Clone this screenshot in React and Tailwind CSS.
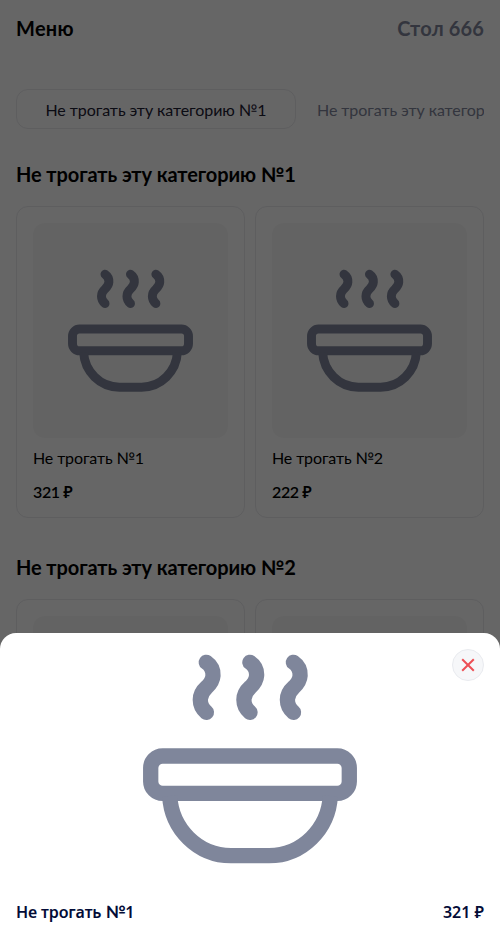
const steam = "c4.6 3.2 7 7.8 6.7 13.3c-.3 5.2-3.1 8.6-6.6 11.9c-3.7 3.3-6.1 7.3-6.1 12.3c0 4.8 2.3 9.4 6.1 12.6";

function BowlIcon({ className }) {
  return (
    <svg className={className} viewBox="143 655 214 209" fill="none" stroke="currentColor" strokeWidth="15.3" strokeLinecap="round">
      <path d={"M206.3 662.3" + steam} />
      <path d={"M249.9 662.3" + steam} />
      <path d={"M293.4 662.3" + steam} />
      <rect x="150.7" y="756" width="198.6" height="37.4" rx="12" />
      <path strokeLinecap="butt" d="M169.7 796C171.5 829 198 855.6 231 855.6H269C302 855.6 328.5 829 330.3 796" />
    </svg>
  );
}

function Card({ name, price }) {
  return (
    <article className="flex h-[312px] flex-1 flex-col rounded-xl border border-[#ebebee] p-4">
      <div className="flex h-[215px] shrink-0 items-center justify-center rounded-xl bg-[#f8f8f8] pt-px">
        <BowlIcon className="w-[125px] overflow-visible text-[#7f869b]" />
      </div>
      <p className="mt-2 text-base leading-6 tracking-[-0.12px]">{name}</p>
      <p className="mt-[10px] text-base leading-6 font-semibold tracking-[-0.4px]">{price}</p>
    </article>
  );
}

function Section({ title, items }) {
  return (
    <section className="mb-[35px]">
      <h2 className="mb-[18px] text-xl leading-7 font-bold tracking-[-0.09px] whitespace-nowrap">{title}</h2>
      <div className="flex gap-[10px]">
        {items.map((item) => <Card key={item.name} {...item} />)}
      </div>
    </section>
  );
}

const items = [
  { name: "Не трогать №1", price: "321 ₽" },
  { name: "Не трогать №2", price: "222 ₽" },
];

export default function App() {
  return (
    <div className="relative h-[939px] w-full overflow-hidden bg-white font-['Lato','Noto_Sans',sans-serif] text-black">
      <main className="px-4 pt-[14px]">
        <header className="flex justify-between text-xl leading-7 font-bold">
          <h1 className="tracking-[0.3px]">Меню</h1>
          <span className="tracking-[0.15px] text-[#7f869b]">Стол 666</span>
        </header>
        <nav className="mt-[47px] mb-[31px] flex h-10 overflow-hidden text-base tracking-[-0.06px] whitespace-nowrap">
          <button className="w-[280px] shrink-0 rounded-xl border border-[#ebebee] pt-0.5 text-[#1d2033]">Не трогать эту категорию №1</button>
          <button className="shrink-0 pt-0.5 pl-[21px] text-[#7f869b]">Не трогать эту категорию №2</button>
        </nav>
        <Section title="Не трогать эту категорию №1" items={items} />
        <Section title="Не трогать эту категорию №2" items={items} />
      </main>
      <div className="absolute inset-0 flex flex-col justify-end bg-black/60">
        <div className="relative flex h-[306px] flex-col items-center rounded-t-2xl bg-white pt-[22px]">
          <BowlIcon className="h-[209px] w-[214px] overflow-visible text-[#7f869b]" />
          <button className="absolute top-4 right-4 flex size-8 items-center justify-center rounded-full border border-[#e9ebef] bg-[#f6f7f9]">
            <svg className="size-[14px] text-[#ed4f55]" viewBox="0 0 14 14" fill="none" stroke="currentColor" strokeWidth="2">
              <path d="M1.2 1.2 12.8 12.8M12.8 1.2 1.2 12.8" />
            </svg>
          </button>
          <div className="mt-[36px] flex w-full justify-between px-4 font-['Noto_Sans',sans-serif] text-base leading-6 font-semibold text-[#030c37]">
            <span className="tracking-[-0.12px]">Не трогать <span className="font-['Lato'] text-[17px] font-bold">№</span>1</span>
            <span>321 ₽</span>
          </div>
        </div>
      </div>
    </div>
  );
}
